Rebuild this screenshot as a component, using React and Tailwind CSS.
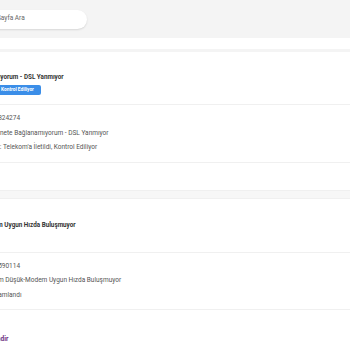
import React from "react";

const rowCls = "text-[6.5px] leading-[14.5px] text-[#555] whitespace-nowrap";

function Row({ label, value, gap }) {
  return (
    <div className={rowCls}>
      <span>{label}:</span>
      <span className={gap}>{value}</span>
    </div>
  );
}

function Card({ title, badge, rows, footer, headH, headPt }) {
  return (
    <div className="bg-white">
      <div className={`${headH} ${headPt} flex flex-col items-start`}>
        <div className="text-[6.3px] leading-[9px] font-bold text-[#333] whitespace-nowrap">{title}</div>
        {badge ? (
          <div className="ml-[51px] mt-[3px] h-[10px] px-[7px] rounded-[2px] bg-[#3b8ee8] text-white text-[4.8px] font-bold leading-[10px] whitespace-nowrap">
            {badge}
          </div>
        ) : null}
      </div>
      <div className="h-px bg-[#f0f0f0]" />
      <div className="pt-[6px] pb-[7px]">
        {rows.map((r, i) => (
          <Row key={i} label={r[0]} value={r[1]} gap={r[2]} />
        ))}
      </div>
      <div className="h-px bg-[#f0f0f0]" />
      {footer}
    </div>
  );
}

export default function App() {
  return (
    <div className="w-[350px] h-[350px] overflow-hidden bg-white" style={{ fontFamily: "Roboto, 'Noto Sans', sans-serif" }}>
      <div className="h-[38px] bg-[#f4f4f4] shadow-[0_1px_2px_rgba(0,0,0,0.05)] flex items-center">
        <div className="-ml-[20px] w-[107px] h-[19px] bg-white rounded-full shadow-[0_1px_2px_rgba(0,0,0,0.12)] flex items-center pl-[17px]">
          <span className="text-[6.5px] text-[#666]">Sayfa Ara</span>
        </div>
      </div>
      <div className="h-[11px] bg-white" />
      <div className="h-[3px] bg-[#f4f4f4]" />
      <div className="-ml-[57px] w-[407px]">
        <Card
          headH="h-[52px]"
          headPt="pt-[20.5px]"
          title="İnternete Bağlanamıyorum - DSL Yanmıyor"
          badge="Kontrol Ediliyor"
          rows={[
            ["Arıza Bildirim No", "1824274", "ml-[1.6px]"],
            ["Arıza Konusu", "İnternete Bağlanamıyorum - DSL Yanmıyor", "ml-[4px]"],
            ["Arıza Kaydı Durumu", "Telekom'a İletildi, Kontrol Ediliyor", "ml-[1.6px]"],
          ]}
          footer={<div className="h-[27px]" />}
        />
      </div>
      <div className="h-[9px] bg-[#f7f7f7] border-y border-[#f0f0f0]" />
      <div className="-ml-[57px] w-[407px]">
        <Card
          headH="h-[53px]"
          headPt="pt-[22.5px]"
          title="Hızım Düşük-Modem Uygun Hızda Buluşmuyor"
          rows={[
            ["Arıza Bildirim No", "1590114", "ml-[1.6px]"],
            ["Arıza Konusu", "Hızım Düşük-Modem Uygun Hızda Buluşmuyor", "ml-[4px]"],
            ["Arıza Durumu", "Tamamlandı", "ml-[1.6px]"],
          ]}
          footer={
            <div className="pt-[25px] pl-[7px]">
              <div className="text-[6.5px] leading-[9px] font-bold text-[#6b2c7d] whitespace-nowrap">Hizmeti Değerlendir</div>
            </div>
          }
        />
      </div>
    </div>
  );
}
